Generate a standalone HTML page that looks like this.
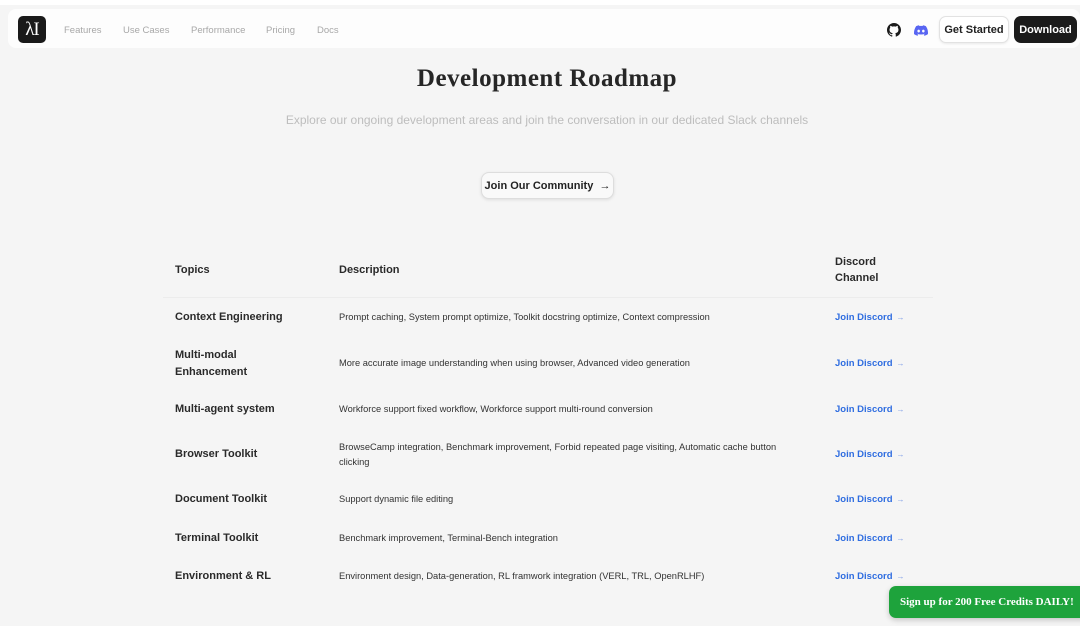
<!DOCTYPE html>
<html><head><meta charset="utf-8"><style>
*{margin:0;padding:0;box-sizing:border-box}
body{width:1080px;height:626px;overflow:hidden;background:#f5f5f5;font-family:"Liberation Sans",Arial,sans-serif;position:relative;color:#222}
.top{position:absolute;left:0;top:0;width:1080px;height:5px;background:#fff}
.nav{position:absolute;left:8px;top:9px;width:1072px;height:39px;background:#fdfdfd;border-radius:8px}
.logo{position:absolute;left:18px;top:16px;width:28px;height:27px;background:#1a1a1a;border-radius:5px;color:#fff;font-family:"Liberation Serif",serif;font-size:19px;text-align:center;line-height:27px;letter-spacing:-1px}
.nl{position:absolute;top:25px;font-size:9.5px;color:#a8a8a8}
.abs{position:absolute}
.btn1{position:absolute;left:939px;top:16px;width:70px;height:27px;border:1px solid #e2e2e2;border-radius:7px;background:#fff;font-size:11px;font-weight:bold;line-height:26px;text-align:center;color:#222;box-shadow:0 1px 2px rgba(0,0,0,.08)}
.btn2{position:absolute;left:1014px;top:16px;width:63px;height:27px;background:#1b1b1b;border-radius:7px;color:#fff;font-size:11px;font-weight:bold;line-height:28px;text-align:center}
h1{position:absolute;left:0;width:1094px;top:65px;text-align:center;font-family:"Liberation Serif",serif;font-size:25px;font-weight:bold;color:#262626;letter-spacing:.5px}
.sub{position:absolute;left:0;width:1094px;top:113px;text-align:center;font-size:12px;color:#bdbdbd}
.jc{position:absolute;left:481px;top:172px;width:133px;height:27px;border:1px solid #ddd;border-radius:8px;background:#f9f9f9;font-size:11px;font-weight:bold;line-height:26px;text-align:center;box-shadow:0 1px 3px rgba(0,0,0,.1)}
.th{position:absolute;font-size:11px;font-weight:bold;color:#2a2a2a;line-height:16px}
.sep{position:absolute;left:163px;top:297px;width:770px;height:1px;background:#ececec}
.t{position:absolute;left:175px;font-size:11px;font-weight:bold;color:#2a2a2a;line-height:17px}
.d{position:absolute;left:339px;font-size:9.3px;color:#333;line-height:15px;width:460px}
.l{position:absolute;left:835px;font-size:9.5px;font-weight:bold;color:#2f6de0}
.l span{color:#7a9ae6;font-weight:normal;margin-left:4px;font-size:8px}
.green{position:absolute;left:889px;top:586px;width:200px;height:32px;background:#1ea33c;border-radius:7px;color:#fff;font-family:"Liberation Serif",serif;font-weight:bold;font-size:11px;line-height:32px;padding-left:11px;box-shadow:0 2px 6px rgba(0,0,0,.2)}
</style></head><body>
<div class="top"></div>
<div class="nav"></div>
<div class="logo">λI</div>
<div class="nl" style="left:64px">Features</div>
<div class="nl" style="left:123px">Use Cases</div>
<div class="nl" style="left:191px">Performance</div>
<div class="nl" style="left:266px">Pricing</div>
<div class="nl" style="left:317px">Docs</div>
<svg class="abs" style="left:887px;top:23px" width="14" height="14" viewBox="0 0 16 16"><path fill="#1b1b1b" d="M8 0C3.58 0 0 3.58 0 8c0 3.540 2.290 6.530 5.470 7.590.4.07.55-.17.55-.38v-1.34c-2.23.48-2.7-1.07-2.7-1.07-.36-.92-.89-1.170-.89-1.17-.73-.5.05-.49.05-.49.8.06 1.23.83 1.23.83.72 1.22 1.87.87 2.33.66.07-.52.28-.87.5-1.07-1.78-.2-3.64-.89-3.640-3.950 0-.87.31-1.59.82-2.15-.08-.2-.36-1.02.08-2.12 0 0 .67-.21 2.2.82a7.6 7.6 0 0 1 4 0c1.53-1.04 2.2-.82 2.2-.82.44 1.1.16 1.92.08 2.12.51.56.82 1.27.82 2.15 0 3.07-1.87 3.75-3.65 3.95.29.25.54.73.54 1.48v2.2c0 .21.15.46.55.38A8 8 0 0 0 16 8c0-4.42-3.58-8-8-8z"/></svg>
<svg class="abs" style="left:914px;top:25px" width="14" height="11" viewBox="0 0 24 18"><path fill="#5865f2" d="M20.3 1.5A19.8 19.8 0 0 0 15.4 0l-.6 1.3a18.4 18.4 0 0 0-5.6 0L8.6 0a19.7 19.7 0 0 0-4.900 1.5C.6 6.2-.3 10.7.1 15.2A20 20 0 0 0 6.2 18l1.3-2.1c-.7-.3-1.4-.6-2-1l.5-.4a14.2 14.2 0 0 0 12 0l.5.4c-.6.4-1.3.7-2 1l1.3 2.1a19.9 19.9 0 0 0 6.1-2.8c.5-5.2-.8-9.7-3.6-13.7zM8 12.4c-1.2 0-2.2-1.1-2.2-2.4S6.8 7.6 8 7.6s2.2 1.1 2.2 2.4-1 2.4-2.2 2.4zm8 0c-1.2 0-2.2-1.1-2.2-2.4s1-2.4 2.2-2.4 2.2 1.1 2.2 2.4-1 2.4-2.2 2.4z"/></svg>
<div class="btn1">Get Started</div>
<div class="btn2">Download</div>
<h1>Development Roadmap</h1>
<div class="sub">Explore our ongoing development areas and join the conversation in our dedicated Slack channels</div>
<div class="jc">Join Our Community &nbsp;→</div>
<div class="th" style="left:175px;top:262px">Topics</div>
<div class="th" style="left:339px;top:262px">Description</div>
<div class="th" style="left:835px;top:254px">Discord<br>Channel</div>
<div class="sep"></div>
<div class="t" style="top:309px">Context Engineering</div>
<div class="d" style="top:310px">Prompt caching, System prompt optimize, Toolkit docstring optimize, Context compression</div>
<div class="l" style="top:312px">Join Discord<span>→</span></div>
<div class="t" style="top:347px">Multi-modal<br>Enhancement</div>
<div class="d" style="top:356px">More accurate image understanding when using browser, Advanced video generation</div>
<div class="l" style="top:358px">Join Discord<span>→</span></div>
<div class="t" style="top:401px">Multi-agent system</div>
<div class="d" style="top:402px">Workforce support fixed workflow, Workforce support multi-round conversion</div>
<div class="l" style="top:404px">Join Discord<span>→</span></div>
<div class="t" style="top:446px">Browser Toolkit</div>
<div class="d" style="top:440px">BrowseCamp integration, Benchmark improvement, Forbid repeated page visiting, Automatic cache button clicking</div>
<div class="l" style="top:449px">Join Discord<span>→</span></div>
<div class="t" style="top:491px">Document Toolkit</div>
<div class="d" style="top:492px">Support dynamic file editing</div>
<div class="l" style="top:494px">Join Discord<span>→</span></div>
<div class="t" style="top:530px">Terminal Toolkit</div>
<div class="d" style="top:531px">Benchmark improvement, Terminal-Bench integration</div>
<div class="l" style="top:533px">Join Discord<span>→</span></div>
<div class="t" style="top:568px">Environment &amp; RL</div>
<div class="d" style="top:569px">Environment design, Data-generation, RL framwork integration (VERL, TRL, OpenRLHF)</div>
<div class="l" style="top:571px">Join Discord<span>→</span></div>
<div class="green">Sign up for 200 Free Credits DAILY!</div>
</body></html>
